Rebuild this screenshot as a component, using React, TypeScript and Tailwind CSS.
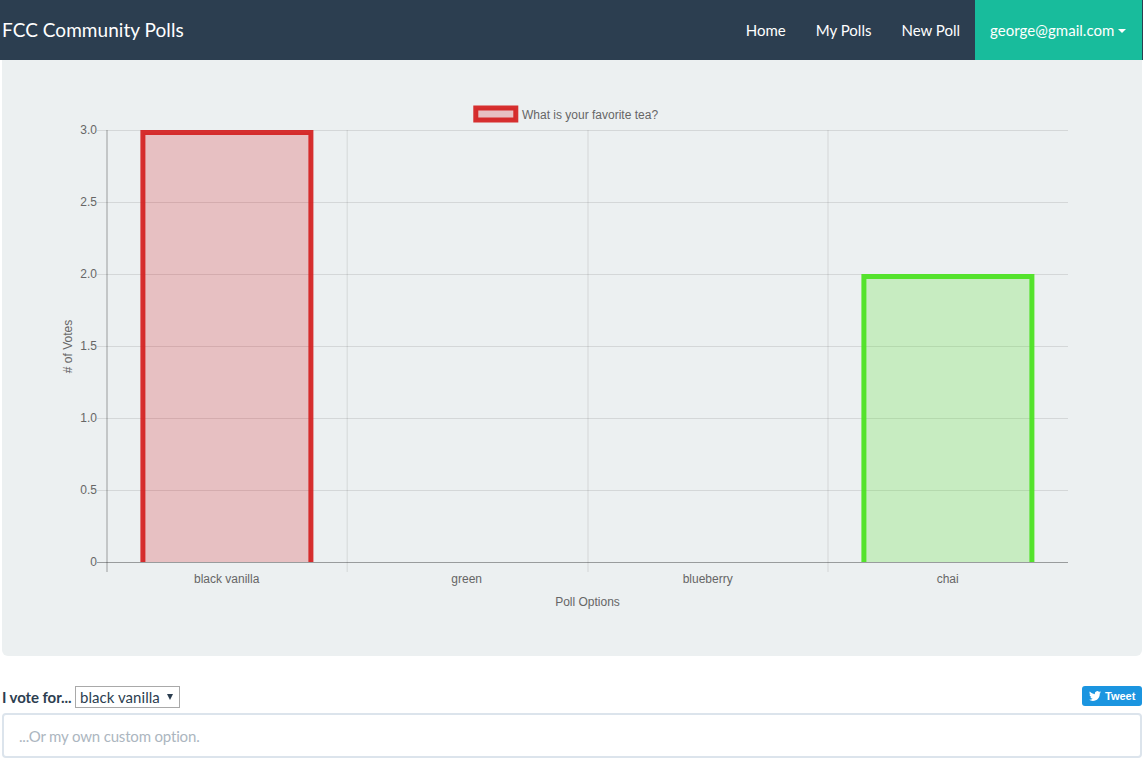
import React from 'react';

const ticks = [
  { label: '3.0', y: 130 },
  { label: '2.5', y: 202 },
  { label: '2.0', y: 274 },
  { label: '1.5', y: 346 },
  { label: '1.0', y: 418 },
  { label: '0.5', y: 490 },
  { label: '0', y: 562 },
];

const options = [
  { label: 'black vanilla', x: 226.7 },
  { label: 'green', x: 466.7 },
  { label: 'blueberry', x: 707.7 },
  { label: 'chai', x: 947.7 },
];

function PollChart() {
  return (
    <svg
      className="block h-[596px] w-[1140px] font-['Liberation_Sans',sans-serif] text-[12px]"
      viewBox="2 60 1140 596"
      fill="#666"
    >
      {ticks.map((t) => (
        <g key={t.label}>
          <line
            x1="97"
            x2="1068"
            y1={t.y + 0.5}
            y2={t.y + 0.5}
            stroke={t.y === 562 ? 'rgba(0,0,0,0.35)' : 'rgba(0,0,0,0.1)'}
          />
          <text x="97" y={t.y + 4} textAnchor="end">
            {t.label}
          </text>
        </g>
      ))}
      <line x1="107" x2="107" y1="130" y2="572" stroke="rgba(0,0,0,0.35)" />
      {[347.2, 588, 828].map((x) => (
        <line key={x} x1={x} x2={x} y1="130" y2="572" stroke="rgba(0,0,0,0.1)" />
      ))}
      <path
        d="M142.9 562V132.5H310.9V562"
        fill="rgba(215,0,10,0.2)"
        stroke="rgba(212,30,30,0.92)"
        strokeWidth="5"
      />
      <path
        d="M863.9 562V276.5H1031.9V562"
        fill="rgba(78,226,36,0.23)"
        stroke="rgba(78,226,36,0.96)"
        strokeWidth="5"
      />
      <rect
        x="475.8"
        y="108"
        width="40"
        height="12"
        fill="rgba(215,0,10,0.2)"
        stroke="rgba(212,30,30,0.92)"
        strokeWidth="5"
      />
      <text x="522" y="119">What is your favorite tea?</text>
      {options.map((o) => (
        <text key={o.label} x={o.x} y="583" textAnchor="middle">
          {o.label}
        </text>
      ))}
      <text x="587.5" y="606" textAnchor="middle">
        Poll Options
      </text>
      <text transform="translate(72 346.5) rotate(-90)" textAnchor="middle">
        # of Votes
      </text>
    </svg>
  );
}

export default function App() {
  return (
    <div className="h-[764px] w-[1143px] overflow-hidden bg-white font-['Lato',sans-serif] text-[15px] leading-[21px] text-[#2c3e50]">
      <nav className="flex h-[60px] items-stretch justify-between bg-[#2c3e50] pr-px pl-[2px] text-white">
        <a className="flex items-center pb-[2px] text-[19px] tracking-[0.05px]">FCC Community Polls</a>
        <div className="flex">
          <a className="flex items-center px-[15px] pt-px">Home</a>
          <a className="flex items-center px-[15px] pt-px">My Polls</a>
          <a className="flex items-center px-[15px] pt-px">New Poll</a>
          <a className="flex w-[167px] items-center bg-[#18bc9c] pt-px pl-[15px]">
            <span className="tracking-[0.05px]">george@gmail.com</span>
            <span className="mt-px ml-1 border-x-4 border-t-4 border-x-transparent border-t-white" />
          </a>
        </div>
      </nav>
      <main className="pr-px pl-[2px]">
        <section className="rounded-b-[6px] bg-[#ecf0f1]">
          <PollChart />
        </section>
        <div className="flex h-[57px] items-start justify-between pt-[30px]">
          <div className="flex items-center">
            <label className="w-[73px] pt-px font-bold tracking-[-0.08px] whitespace-nowrap">I vote for...</label>
            <button className="flex h-[22px] w-[105px] items-center justify-between border border-[#a9a9a9] bg-white pr-[6px] pl-1 text-[15px] whitespace-nowrap">
              <span className="pt-px tracking-[0.05px]">black vanilla</span>
              <svg className="mb-px h-[6px] w-[6px]" viewBox="0 0 6 6" fill="#2c3e50">
                <path d="M0 0H6L3 6Z" />
              </svg>
            </button>
          </div>
          <a className="flex h-5 w-[60px] items-center rounded-[3px] bg-[#1b95e0] pl-[7px] font-['Liberation_Sans',sans-serif] text-[11px] font-bold text-white">
            <svg className="mr-1 h-[12px] w-[12px]" viewBox="0 1.5 24 21" fill="#fff">
              <path d="M23.954 4.569a10 10 0 0 1-2.825.775 4.958 4.958 0 0 0 2.163-2.723 9.99 9.99 0 0 1-3.127 1.184 4.92 4.92 0 0 0-8.384 4.482C7.691 8.094 4.066 6.13 1.64 3.161a4.822 4.822 0 0 0-.666 2.475c0 1.71.87 3.213 2.188 4.096a4.904 4.904 0 0 1-2.228-.616v.061a4.923 4.923 0 0 0 3.946 4.827 4.996 4.996 0 0 1-2.212.085 4.937 4.937 0 0 0 4.604 3.417 9.868 9.868 0 0 1-6.102 2.105c-.39 0-.779-.023-1.17-.067a13.995 13.995 0 0 0 7.557 2.209c9.054 0 13.999-7.496 13.999-13.986 0-.209 0-.42-.015-.63a9.936 9.936 0 0 0 2.46-2.548z" />
            </svg>
            Tweet
          </a>
        </div>
        <input
          className="block h-[45px] w-full rounded border-2 border-[#dce4ec] bg-white px-[15px] pt-px text-[15px] tracking-[-0.17px] placeholder:text-[#acb6c0]"
          placeholder="...Or my own custom option."
        />
      </main>
    </div>
  );
}
